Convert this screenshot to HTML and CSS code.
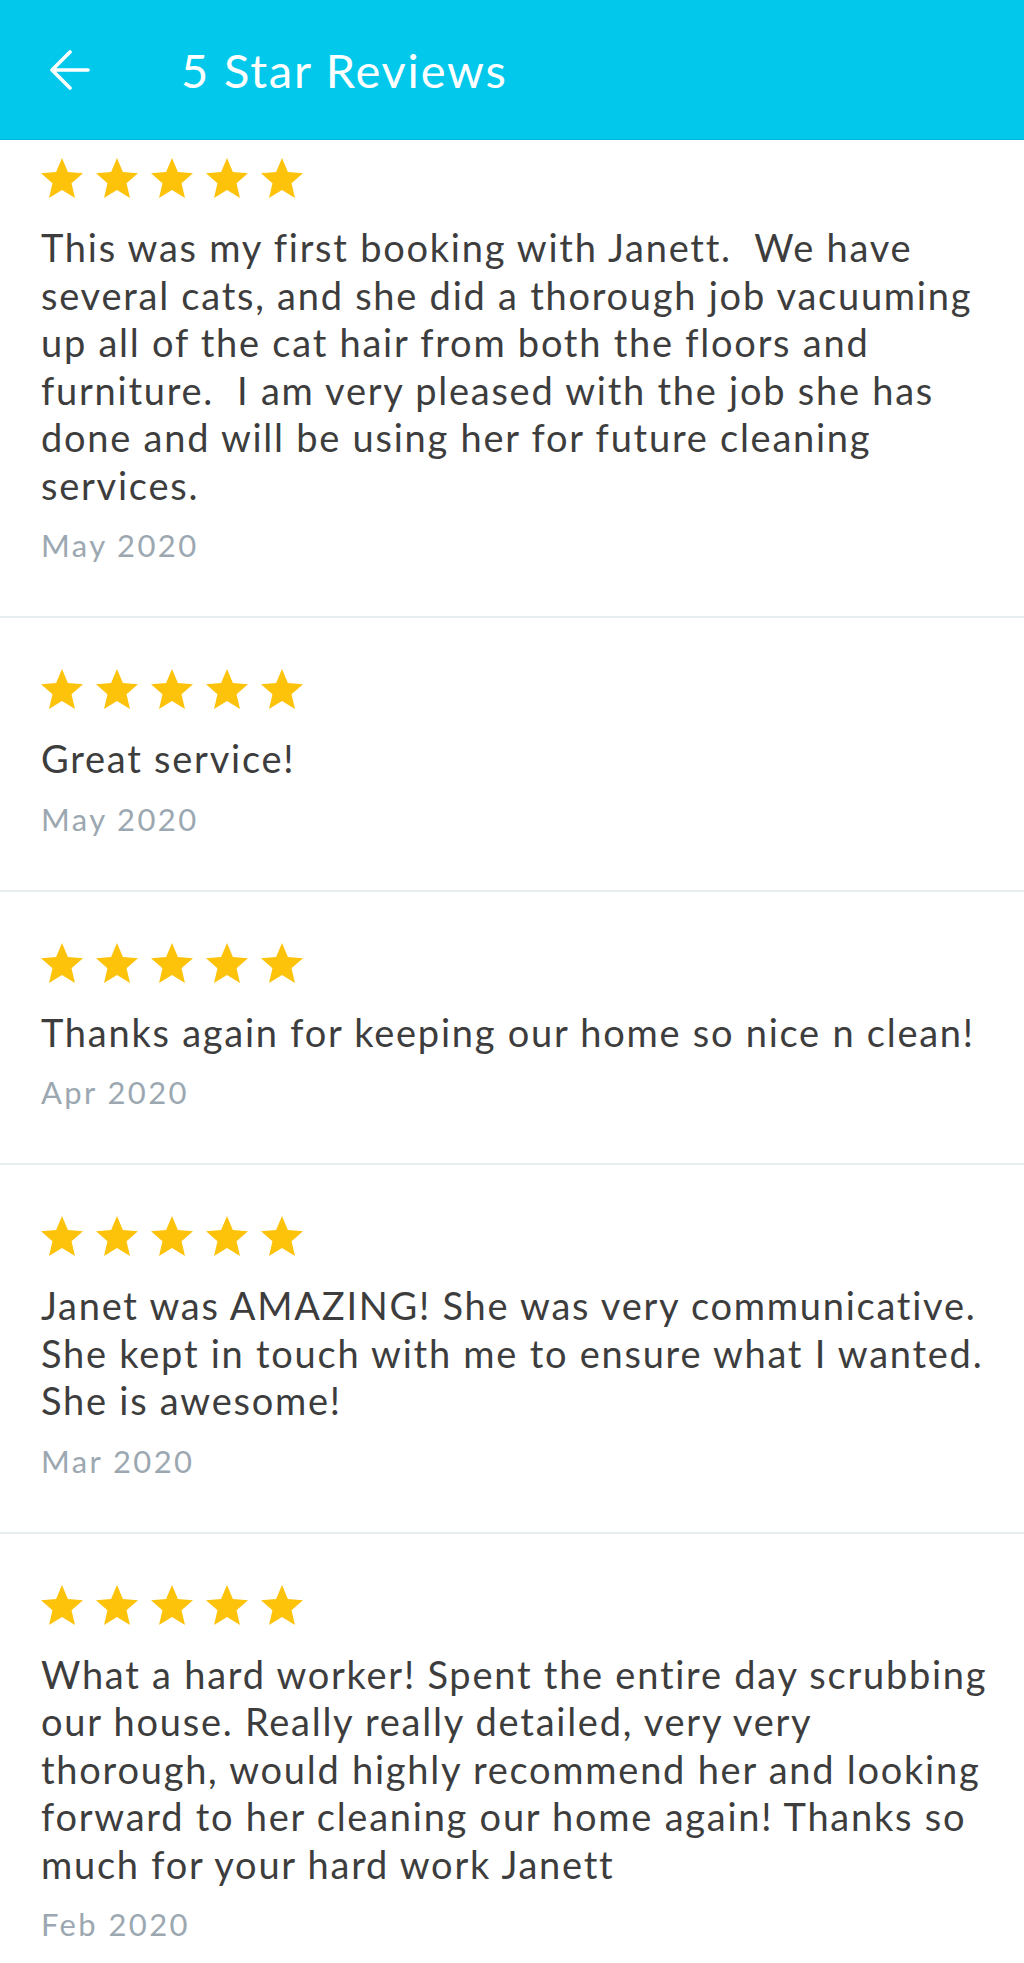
FILE: index.html
```html
<!DOCTYPE html>
<html lang="en">
<head>
<meta charset="utf-8">
<title>5 Star Reviews</title>
<link rel="stylesheet" href="styles.css">
</head>
<body>
<header class="appbar">
  <svg class="back" viewBox="0 0 40 40" aria-hidden="true">
    <path d="M38 20H3M20 2L2 20l18 18" fill="none" stroke="#fff" stroke-width="3.6" stroke-linecap="round" stroke-linejoin="round"/>
  </svg>
  <h1 class="title">5 Star Reviews</h1>
</header>

<main class="list">
  <section class="review">
    <div class="stars">
      <svg viewBox="2 2 20 19"><path d="M12 17.27L18.18 21l-1.64-7.03L22 9.24l-7.19-.61L12 2 9.19 8.63 2 9.24l5.46 4.73L5.82 21z"/></svg>
      <svg viewBox="2 2 20 19"><path d="M12 17.27L18.18 21l-1.64-7.03L22 9.24l-7.19-.61L12 2 9.19 8.63 2 9.24l5.46 4.73L5.82 21z"/></svg>
      <svg viewBox="2 2 20 19"><path d="M12 17.27L18.18 21l-1.64-7.03L22 9.24l-7.19-.61L12 2 9.19 8.63 2 9.24l5.46 4.73L5.82 21z"/></svg>
      <svg viewBox="2 2 20 19"><path d="M12 17.27L18.18 21l-1.64-7.03L22 9.24l-7.19-.61L12 2 9.19 8.63 2 9.24l5.46 4.73L5.82 21z"/></svg>
      <svg viewBox="2 2 20 19"><path d="M12 17.27L18.18 21l-1.64-7.03L22 9.24l-7.19-.61L12 2 9.19 8.63 2 9.24l5.46 4.73L5.82 21z"/></svg>
    </div>
    <p class="text">This was my first booking with Janett.&nbsp; We have several cats, and she did a thorough job vacuuming up all of the cat hair from both the floors and furniture.&nbsp; I am very pleased with the job she has done and will be using her for future cleaning services.</p>
    <p class="date">May 2020</p>
  </section>

  <section class="review">
    <div class="stars">
      <svg viewBox="2 2 20 19"><path d="M12 17.27L18.18 21l-1.64-7.03L22 9.24l-7.19-.61L12 2 9.19 8.63 2 9.24l5.46 4.73L5.82 21z"/></svg>
      <svg viewBox="2 2 20 19"><path d="M12 17.27L18.18 21l-1.64-7.03L22 9.24l-7.19-.61L12 2 9.19 8.63 2 9.24l5.46 4.73L5.82 21z"/></svg>
      <svg viewBox="2 2 20 19"><path d="M12 17.27L18.18 21l-1.64-7.03L22 9.24l-7.19-.61L12 2 9.19 8.63 2 9.24l5.46 4.73L5.82 21z"/></svg>
      <svg viewBox="2 2 20 19"><path d="M12 17.27L18.18 21l-1.64-7.03L22 9.24l-7.19-.61L12 2 9.19 8.63 2 9.24l5.46 4.73L5.82 21z"/></svg>
      <svg viewBox="2 2 20 19"><path d="M12 17.27L18.18 21l-1.64-7.03L22 9.24l-7.19-.61L12 2 9.19 8.63 2 9.24l5.46 4.73L5.82 21z"/></svg>
    </div>
    <p class="text">Great service!</p>
    <p class="date">May 2020</p>
  </section>

  <section class="review">
    <div class="stars">
      <svg viewBox="2 2 20 19"><path d="M12 17.27L18.18 21l-1.64-7.03L22 9.24l-7.19-.61L12 2 9.19 8.63 2 9.24l5.46 4.73L5.82 21z"/></svg>
      <svg viewBox="2 2 20 19"><path d="M12 17.27L18.18 21l-1.64-7.03L22 9.24l-7.19-.61L12 2 9.19 8.63 2 9.24l5.46 4.73L5.82 21z"/></svg>
      <svg viewBox="2 2 20 19"><path d="M12 17.27L18.18 21l-1.64-7.03L22 9.24l-7.19-.61L12 2 9.19 8.63 2 9.24l5.46 4.73L5.82 21z"/></svg>
      <svg viewBox="2 2 20 19"><path d="M12 17.27L18.18 21l-1.64-7.03L22 9.24l-7.19-.61L12 2 9.19 8.63 2 9.24l5.46 4.73L5.82 21z"/></svg>
      <svg viewBox="2 2 20 19"><path d="M12 17.27L18.18 21l-1.64-7.03L22 9.24l-7.19-.61L12 2 9.19 8.63 2 9.24l5.46 4.73L5.82 21z"/></svg>
    </div>
    <p class="text">Thanks again for keeping our home so nice n clean!</p>
    <p class="date">Apr 2020</p>
  </section>

  <section class="review">
    <div class="stars">
      <svg viewBox="2 2 20 19"><path d="M12 17.27L18.18 21l-1.64-7.03L22 9.24l-7.19-.61L12 2 9.19 8.63 2 9.24l5.46 4.73L5.82 21z"/></svg>
      <svg viewBox="2 2 20 19"><path d="M12 17.27L18.18 21l-1.64-7.03L22 9.24l-7.19-.61L12 2 9.19 8.63 2 9.24l5.46 4.73L5.82 21z"/></svg>
      <svg viewBox="2 2 20 19"><path d="M12 17.27L18.18 21l-1.64-7.03L22 9.24l-7.19-.61L12 2 9.19 8.63 2 9.24l5.46 4.73L5.82 21z"/></svg>
      <svg viewBox="2 2 20 19"><path d="M12 17.27L18.18 21l-1.64-7.03L22 9.24l-7.19-.61L12 2 9.19 8.63 2 9.24l5.46 4.73L5.82 21z"/></svg>
      <svg viewBox="2 2 20 19"><path d="M12 17.27L18.18 21l-1.64-7.03L22 9.24l-7.19-.61L12 2 9.19 8.63 2 9.24l5.46 4.73L5.82 21z"/></svg>
    </div>
    <p class="text">Janet was AMAZING! She was very communicative. She kept in touch with me to ensure what I wanted. She is awesome!</p>
    <p class="date">Mar 2020</p>
  </section>

  <section class="review">
    <div class="stars">
      <svg viewBox="2 2 20 19"><path d="M12 17.27L18.18 21l-1.64-7.03L22 9.24l-7.19-.61L12 2 9.19 8.63 2 9.24l5.46 4.73L5.82 21z"/></svg>
      <svg viewBox="2 2 20 19"><path d="M12 17.27L18.18 21l-1.64-7.03L22 9.24l-7.19-.61L12 2 9.19 8.63 2 9.24l5.46 4.73L5.82 21z"/></svg>
      <svg viewBox="2 2 20 19"><path d="M12 17.27L18.18 21l-1.64-7.03L22 9.24l-7.19-.61L12 2 9.19 8.63 2 9.24l5.46 4.73L5.82 21z"/></svg>
      <svg viewBox="2 2 20 19"><path d="M12 17.27L18.18 21l-1.64-7.03L22 9.24l-7.19-.61L12 2 9.19 8.63 2 9.24l5.46 4.73L5.82 21z"/></svg>
      <svg viewBox="2 2 20 19"><path d="M12 17.27L18.18 21l-1.64-7.03L22 9.24l-7.19-.61L12 2 9.19 8.63 2 9.24l5.46 4.73L5.82 21z"/></svg>
    </div>
    <p class="text">What a hard worker! Spent the entire day scrubbing our house. Really really detailed, very very thorough, would highly recommend her and looking forward to her cleaning our home again! Thanks so much for your hard work Janett</p>
    <p class="date">Feb 2020</p>
  </section>
</main>
</body>
</html>
```

FILE: styles.css
```css
* { box-sizing: border-box; }

html, body {
  margin: 0;
  padding: 0;
  background: #ffffff;
}

body {
  font-family: "Lato", "Noto Sans", sans-serif;
  color: #3d3d3d;
  overflow: hidden;
}

.appbar {
  height: 139px;
  background: #02c9eb;
  display: flex;
  align-items: center;
  padding-left: 50px;
  box-shadow: 0 1px 0 #00b6d6;
}

.back {
  width: 40px;
  height: 40px;
  flex: none;
}

.title {
  margin: 0 0 0 91px;
  font-weight: 400;
  font-size: 47px;
  letter-spacing: 1.8px;
  color: #ffffff;
  line-height: 1;
  padding-top: 2px;
}

.review {
  padding: 51px 29px 53px 41px;
  border-top: 2px solid #e8eef0;
}

.review:first-child {
  padding-top: 19px;
  border-top: none;
}

.stars {
  display: flex;
  gap: 13px;
  height: 40px;
}

.stars svg {
  width: 42px;
  height: 40px;
  fill: #fdc20a;
}

.text {
  margin: 26px 0 0;
  font-size: 38px;
  letter-spacing: 1.75px;
  line-height: 47.5px;
  color: #3d3d3d;
}

.date {
  margin: 18px 0 0;
  font-size: 31px;
  letter-spacing: 2.4px;
  line-height: 36px;
  color: #9ca8b1;
}
```
